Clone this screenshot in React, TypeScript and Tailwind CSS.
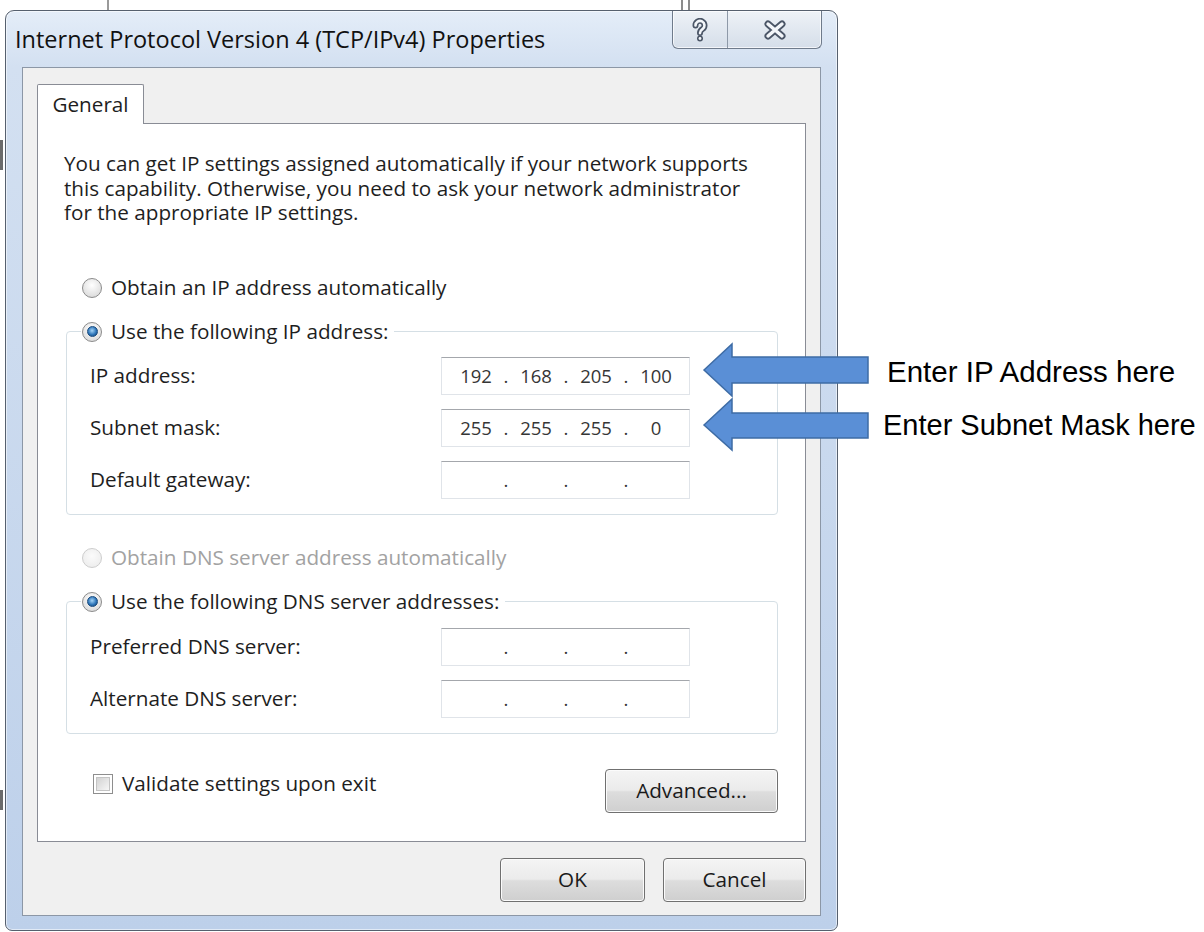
import React from 'react';

const ui = "font-['Open_Sans','Noto_Sans',sans-serif]";

function Radio({ checked = false, disabled = false }: { checked?: boolean; disabled?: boolean }) {
  return (
    <span
      className={`flex h-[20px] w-[20px] shrink-0 items-center justify-center rounded-full border ${
        disabled
          ? 'border-[#cdcdcd] bg-[radial-gradient(circle_at_50%_40%,#fbfbfb,#eaeaea)]'
          : 'border-[#8b8b8b] bg-[radial-gradient(circle_at_50%_35%,#ffffff,#d3d3d3)]'
      }`}
    >
      {checked && (
        <span className="h-[11px] w-[11px] rounded-full border border-[#18497c] bg-[radial-gradient(circle_at_45%_40%,#a6d4f6,#2f77ba_55%,#103c6c)]" />
      )}
    </span>
  );
}

function IpBox({ parts = ['', '', '', ''] }: { parts?: string[] }) {
  return (
    <div className="flex h-[38px] w-[249px] items-center border border-[#e0e4e9] border-t-[#a4a7ac] bg-white pl-[8px] text-[18.5px] text-[#363636]">
      {parts.map((v, i) => (
        <React.Fragment key={i}>
          {i > 0 && <span className="w-[8px] text-center">.</span>}
          <span className="w-[52px] text-center">{v}</span>
        </React.Fragment>
      ))}
    </div>
  );
}

function Field({ label, parts }: { label: string; parts?: string[] }) {
  return (
    <div className="flex items-center pl-[23px]">
      <span className="w-[351px] text-[#1e1e1e]">{label}</span>
      <IpBox parts={parts} />
    </div>
  );
}

function WinButton({ children, className = '' }: { children: React.ReactNode; className?: string }) {
  return (
    <button
      className={`flex h-[44px] items-center justify-center rounded-[4px] border border-[#707070] bg-[linear-gradient(to_bottom,#f4f4f4_0%,#ebebeb_48%,#dddddd_52%,#cfcfcf_100%)] text-[20.7px] text-[#1a1a1a] shadow-[inset_0_0_0_1px_#fbfbfb] ${className}`}
    >
      {children}
    </button>
  );
}

function HelpGlyph() {
  return (
    <svg width="18" height="24" viewBox="0 0 18 24">
      <path d="M4.5 7.5a4.5 4.5 0 1 1 7 3.6c-1.8 1.2-2.5 2.1-2.5 4" fill="none" stroke="#4b5667" strokeWidth="6" strokeLinecap="round" />
      <path d="M4.5 7.5a4.5 4.5 0 1 1 7 3.6c-1.8 1.2-2.5 2.1-2.5 4" fill="none" stroke="#f3f6fa" strokeWidth="2.6" strokeLinecap="round" />
      <circle cx="9" cy="20.5" r="3" fill="#4b5667" />
      <circle cx="9" cy="20.5" r="1.4" fill="#f3f6fa" />
    </svg>
  );
}

function CloseGlyph() {
  return (
    <svg width="26" height="20" viewBox="0 0 26 20">
      <path d="M6 4L20 16M20 4L6 16" stroke="#4b5667" strokeWidth="7" strokeLinecap="round" />
      <path d="M6 4L20 16M20 4L6 16" stroke="#f3f6fa" strokeWidth="3.4" strokeLinecap="round" />
    </svg>
  );
}

// two block arrows pointing at the address and mask fields
function Callouts() {
  return (
    <>
      <svg className="absolute left-[700px] top-[338px]" width="172" height="116" viewBox="0 0 172 116">
        <polygon points="4,32 32,6 32,19 168,19 168,45 32,45 32,58" fill="#5a8fd6" stroke="#3e6ca5" strokeWidth="1.5" />
        <polygon points="4,87 32,61 32,75 168,75 168,100 32,100 32,112" fill="#5a8fd6" stroke="#3e6ca5" strokeWidth="1.5" />
      </svg>
      <div className="absolute left-[887px] top-[357px] font-['Liberation_Sans',Arial,sans-serif] text-[29.5px] leading-[29px] text-black">
        Enter IP Address here
      </div>
      <div className="absolute left-[883px] top-[411px] font-['Liberation_Sans',Arial,sans-serif] text-[29px] leading-[29px] text-black">
        Enter Subnet Mask here
      </div>
    </>
  );
}

export default function App() {
  return (
    <div className={`relative h-[932px] w-[1204px] overflow-hidden bg-white ${ui}`}>
      {/* bits of the desktop showing behind the dialog */}
      <div className="absolute left-[107px] top-0 h-[10px] w-[2px] bg-[#9a9a9a]" />
      <div className="absolute left-[681px] top-0 h-[12px] w-[2px] bg-[#8c8c8c]" />
      <div className="absolute left-[688px] top-0 h-[12px] w-[2px] bg-[#8c8c8c]" />
      <div className="absolute left-0 top-[140px] h-[30px] w-[3px] bg-[#6b6b6b]" />
      <div className="absolute left-0 top-[790px] h-[20px] w-[3px] bg-[#6b6b6b]" />

      <div className="relative pl-[5px] pt-[10px]">
        <div className="flex h-[921px] w-[833px] flex-col rounded-t-[9px] rounded-b-[7px] border border-[#56606e] bg-[linear-gradient(180deg,#e4edf8_0px,#d3e0f1_56px,#bdd0ea_100%)] shadow-[inset_0_0_0_1px_rgba(255,255,255,0.55)]">
          {/* caption bar */}
          <div className="flex h-[56px] shrink-0 items-start justify-between">
            <div className="whitespace-nowrap pl-[9px] pt-[13px] text-[23.5px] leading-[30px] text-[#111]">
              Internet Protocol Version 4 (TCP/IPv4) Properties
            </div>
            <div className="mr-[15px] flex h-[38px] w-[150px] overflow-hidden rounded-b-[6px] border border-t-0 border-[#6f7b8b] bg-[linear-gradient(180deg,#eef2f7,#d5dee9)] shadow-[inset_0_0_0_1px_rgba(255,255,255,0.7)]">
              <div className="flex w-[55px] items-center justify-center border-r border-[#8e99a8]">
                <HelpGlyph />
              </div>
              <div className="flex flex-1 items-center justify-center">
                <CloseGlyph />
              </div>
            </div>
          </div>

          {/* client area */}
          <div className="mx-[16px] flex h-[849px] flex-col border border-[#8c97a6] bg-[#f0f0f0] px-[14px] text-[20.7px] text-[#1e1e1e]">
            <div className="relative z-10 mt-[16px] flex h-[40px] w-[107px] items-center justify-center rounded-t-[2px] border border-b-0 border-[#898c95] bg-white">
              General
            </div>

            <div className="-mt-[1px] flex h-[719px] flex-col border border-[#898c95] bg-white">
              <p className="whitespace-nowrap pl-[26px] pt-[27px] leading-[24.5px]">
                You can get IP settings assigned automatically if your network supports
                <br />
                this capability. Otherwise, you need to ask your network administrator
                <br />
                for the appropriate IP settings.
              </p>

              <label className="mt-[50px] flex h-[26px] items-center gap-[9px] pl-[44px]">
                <Radio />
                <span>Obtain an IP address automatically</span>
              </label>

              <fieldset className="ml-[28px] mt-[18px] w-[712px] rounded-[4px] border border-[#d5dfe5] pb-[15px]">
                <legend className="ml-[14px] flex h-[26px] items-center gap-[9px] px-[1px] pr-[6px]">
                  <Radio checked />
                  <span>Use the following IP address:</span>
                </legend>
                <div className="flex flex-col gap-[14px] pt-[12px]">
                  <Field label="IP address:" parts={['192', '168', '205', '100']} />
                  <Field label="Subnet mask:" parts={['255', '255', '255', '0']} />
                  <Field label="Default gateway:" />
                </div>
              </fieldset>

              <label className="mt-[30px] flex h-[26px] items-center gap-[9px] pl-[44px] text-[#a2a2a2]">
                <Radio disabled />
                <span>Obtain DNS server address automatically</span>
              </label>

              <fieldset className="ml-[28px] mt-[18px] w-[712px] rounded-[4px] border border-[#d5dfe5] pb-[15px]">
                <legend className="ml-[14px] flex h-[26px] items-center gap-[9px] px-[1px] pr-[6px]">
                  <Radio checked />
                  <span>Use the following DNS server addresses:</span>
                </legend>
                <div className="flex flex-col gap-[14px] pt-[13px]">
                  <Field label="Preferred DNS server:" />
                  <Field label="Alternate DNS server:" />
                </div>
              </fieldset>

              <div className="mt-[35px] flex items-start justify-between pl-[55px] pr-[27px]">
                <label className="mt-[2px] flex h-[26px] items-center gap-[9px]">
                  <span className="flex h-[20px] w-[20px] items-center justify-center border border-[#8e8e8e] bg-white">
                    <span className="h-[14px] w-[14px] border border-[#c4c4c4] bg-[linear-gradient(135deg,#d2d2d2,#f6f6f6)]" />
                  </span>
                  <span>Validate settings upon exit</span>
                </label>
                <WinButton className="h-[43px] w-[173px]">Advanced...</WinButton>
              </div>
            </div>

            <div className="mt-[16px] flex justify-end gap-[18px]">
              <WinButton className="w-[145px]">OK</WinButton>
              <WinButton className="w-[143px]">Cancel</WinButton>
            </div>
          </div>
        </div>
      </div>

      <Callouts />
    </div>
  );
}
